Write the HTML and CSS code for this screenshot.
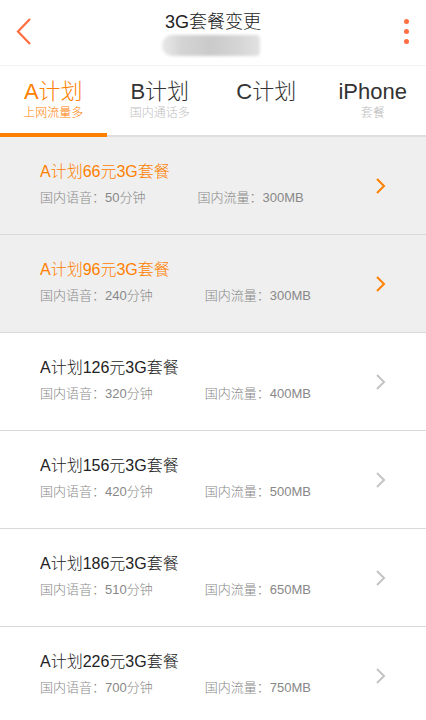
FILE: index.html
```html
<!DOCTYPE html>
<html lang="zh-CN">
<head>
  <meta charset="UTF-8">
  <meta name="viewport" content="width=device-width, initial-scale=1.0">
  <title>3G套餐变更</title>
  <link rel="stylesheet" href="styles.css">
</head>
<body>
  <div class="header">
    <svg class="back" width="20" height="30" viewBox="0 0 20 30">
      <polyline points="14,2 2,14.5 14,27" fill="none" stroke="#ff6e40" stroke-width="2.2"/>
    </svg>
    <div class="title-wrap">
      <div class="title">3G套餐变更</div>
      <div class="phone"></div>
    </div>
    <div class="more">
      <span></span><span></span><span></span>
    </div>
  </div>

  <div class="tabs">
    <div class="tab active">
      <div class="tab-name">A计划</div>
      <div class="tab-sub">上网流量多</div>
    </div>
    <div class="tab">
      <div class="tab-name">B计划</div>
      <div class="tab-sub">国内通话多</div>
    </div>
    <div class="tab">
      <div class="tab-name">C计划</div>
      <div class="tab-sub">&nbsp;</div>
    </div>
    <div class="tab">
      <div class="tab-name">iPhone</div>
      <div class="tab-sub">套餐</div>
    </div>
  </div>

  <div class="list">
    <div class="item selected">
      <div class="info">
        <div class="name">A计划66元3G套餐</div>
        <div class="detail"><span>国内语音：50分钟</span><span class="flow">国内流量：300MB</span></div>
      </div>
      <svg class="arrow" width="12" height="16" viewBox="0 0 12 16"><polyline points="2,1 9,8 2,15" fill="none" stroke-width="2"/></svg>
    </div>
    <div class="item selected">
      <div class="info">
        <div class="name">A计划96元3G套餐</div>
        <div class="detail"><span>国内语音：240分钟</span><span class="flow">国内流量：300MB</span></div>
      </div>
      <svg class="arrow" width="12" height="16" viewBox="0 0 12 16"><polyline points="2,1 9,8 2,15" fill="none" stroke-width="2"/></svg>
    </div>
    <div class="item">
      <div class="info">
        <div class="name">A计划126元3G套餐</div>
        <div class="detail"><span>国内语音：320分钟</span><span class="flow">国内流量：400MB</span></div>
      </div>
      <svg class="arrow" width="12" height="16" viewBox="0 0 12 16"><polyline points="2,1 9,8 2,15" fill="none" stroke-width="2"/></svg>
    </div>
    <div class="item">
      <div class="info">
        <div class="name">A计划156元3G套餐</div>
        <div class="detail"><span>国内语音：420分钟</span><span class="flow">国内流量：500MB</span></div>
      </div>
      <svg class="arrow" width="12" height="16" viewBox="0 0 12 16"><polyline points="2,1 9,8 2,15" fill="none" stroke-width="2"/></svg>
    </div>
    <div class="item">
      <div class="info">
        <div class="name">A计划186元3G套餐</div>
        <div class="detail"><span>国内语音：510分钟</span><span class="flow">国内流量：650MB</span></div>
      </div>
      <svg class="arrow" width="12" height="16" viewBox="0 0 12 16"><polyline points="2,1 9,8 2,15" fill="none" stroke-width="2"/></svg>
    </div>
    <div class="item">
      <div class="info">
        <div class="name">A计划226元3G套餐</div>
        <div class="detail"><span>国内语音：700分钟</span><span class="flow">国内流量：750MB</span></div>
      </div>
      <svg class="arrow" width="12" height="16" viewBox="0 0 12 16"><polyline points="2,1 9,8 2,15" fill="none" stroke-width="2"/></svg>
    </div>
  </div>
</body>
</html>
```

FILE: styles.css
```css
body {
  margin: 0;
  background: #fff;
  font-family: "Liberation Sans", "Noto Sans CJK SC", sans-serif;
  font-weight: 300;
  color: #333;
  overflow: hidden;
}
.header {
  height: 65px;
  border-bottom: 1px solid #f2f2f2;
  display: grid;
  grid-template-columns: 1fr auto 1fr;
  align-items: start;
}
.back {
  margin: 17px 0 0 16px;
}
.title-wrap {
  display: flex;
  flex-direction: column;
  align-items: center;
  padding-top: 11px;
}
.title {
  font-size: 18px;
  line-height: 22px;
  color: #222;
}
.phone {
  width: 98px;
  height: 21px;
  margin: 2px 4px 0 0;
  border-radius: 10px 4px 4px 10px;
  background: linear-gradient(90deg, #e8e8e8 0%, #d4d4d4 20%, #cacaca 50%, #d6d6d6 80%, #e2e2e2 100%);
  filter: blur(1.5px);
}
.more {
  justify-self: end;
  display: flex;
  flex-direction: column;
  gap: 5px;
  margin: 19px 17px 0 0;
}
.more span {
  width: 5px;
  height: 5px;
  border-radius: 50%;
  background: #ff6e40;
}
.tabs {
  display: grid;
  grid-template-columns: repeat(4, 1fr);
  border-bottom: 2px solid #dedede;
  height: 69px;
}
.tab {
  text-align: center;
  padding-top: 13px;
  box-sizing: border-box;
  color: #333;
}
.tab-name {
  font-size: 22px;
  line-height: 26px;
}
.tab-sub {
  font-size: 12px;
  line-height: 14px;
  color: #c0c0c0;
  margin-top: 1px;
}
.tab.active {
  color: #ff7f00;
  border-bottom: 4px solid #ff7f00;
  margin-bottom: -2px;
}
.tab.active .tab-sub {
  color: #ff7f00;
}
.item {
  display: flex;
  align-items: center;
  justify-content: space-between;
  height: 97px;
  border-bottom: 1px solid #d9d9d9;
  padding: 0 39px 0 40px;
}
.item.selected {
  background: #efefef;
}
.info {
  margin-top: -2px;
}
.name {
  font-size: 16px;
  line-height: 20px;
  color: #222;
}
.selected .name {
  color: #ff7f00;
}
.detail {
  margin-top: 7px;
  font-size: 13px;
  line-height: 18px;
  color: #888;
}
.flow {
  margin-left: 52px;
}
.arrow polyline {
  stroke: #c4c4c4;
}
.selected .arrow polyline {
  stroke: #ff8000;
}
```
